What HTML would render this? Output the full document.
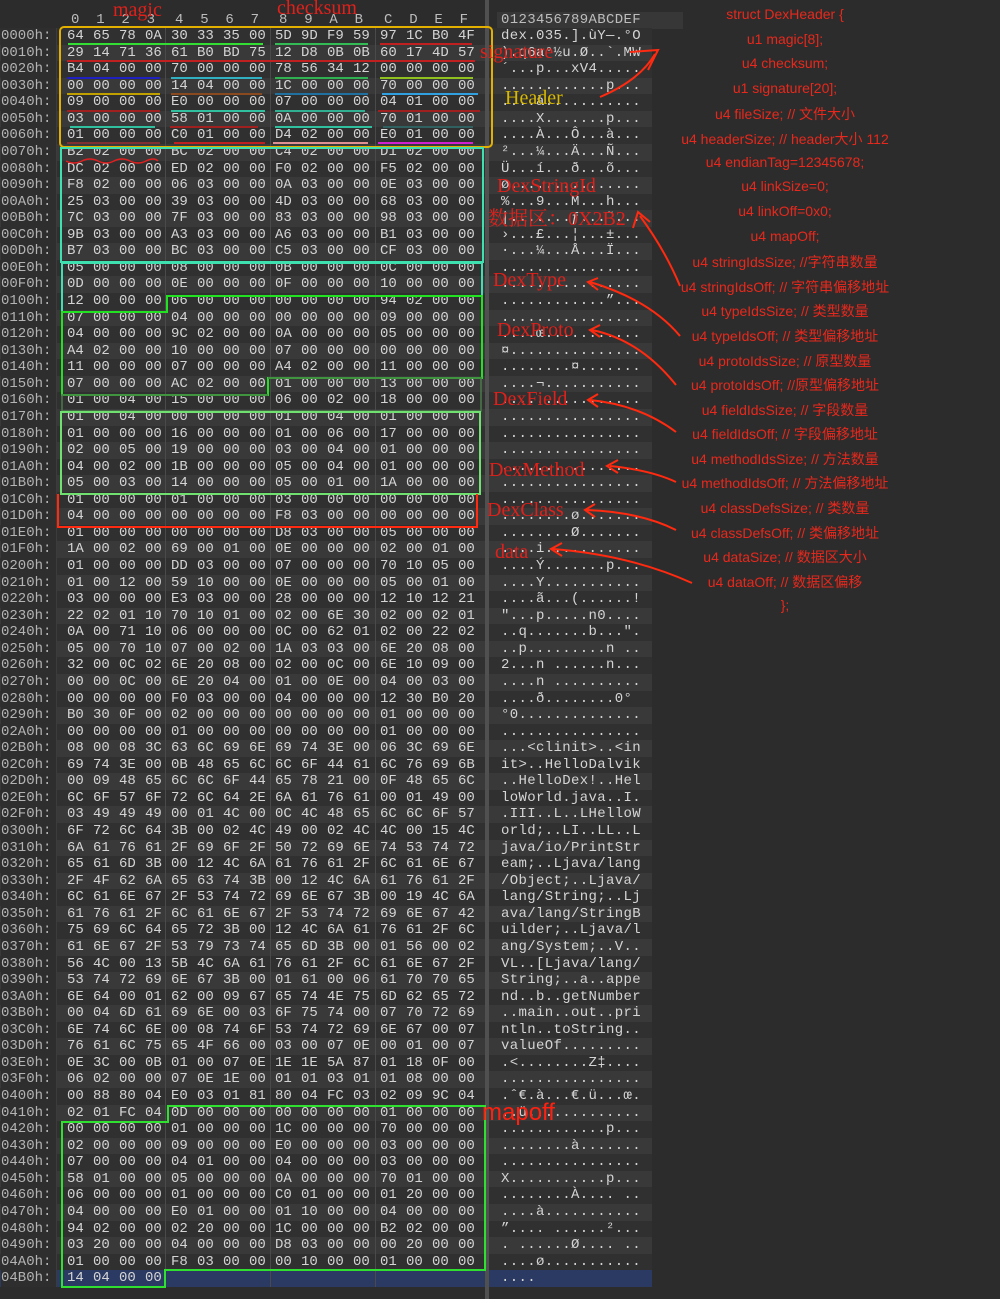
<!DOCTYPE html>
<html><head><meta charset="utf-8"><style>
*{margin:0;padding:0;box-sizing:border-box}
body{width:1000px;height:1299px;background:#2c2c2c;position:relative;overflow:hidden;font-family:"Liberation Mono",monospace;color:#d4d4d4}
#rows{position:absolute;left:0;top:28px;width:652px}
.r{height:16.57px;line-height:16.57px;position:relative;font-size:14px;white-space:pre;background:#303030}
.r:nth-child(even){background:#393939}
.a{position:absolute;left:1px;color:#b4b4b4;width:55px;background:#2e2e2e;height:100%}
.g{position:absolute;word-spacing:0.8px}
.g1{left:67px}.g2{left:171px}.g3{left:275px}.g4{left:380px}
.t{position:absolute;left:501px;letter-spacing:0.35px}
.hdr{position:absolute;top:12px;font-size:14px;white-space:pre;color:#bdbdbd}
.vl{position:absolute;top:28px;width:1px;height:1259px;background:#4a4a4a}
.rt{position:absolute;left:660px;width:250px;text-align:center;font-family:"Liberation Sans","Noto Sans CJK SC",sans-serif;font-size:14px;color:#e8281c}
.lab{position:absolute;font-family:"Liberation Serif","Noto Serif CJK SC",serif;font-size:20px;color:#e0201a;white-space:nowrap;line-height:1}
</style></head><body>
<div style="position:absolute;left:497px;top:12px;width:186px;height:17px;background:#373737"></div>
<div class="hdr" style="left:71px;word-spacing:0">0  1  2  3</div>
<div class="hdr" style="left:175px">4  5  6  7</div>
<div class="hdr" style="left:279px">8  9  A  B</div>
<div class="hdr" style="left:384px">C  D  E  F</div>
<div class="hdr" style="left:501px;letter-spacing:0.35px">0123456789ABCDEF</div>
<div id="rows">
<div class="r"><span class="a">0000h:</span><span class="g g1">64 65 78 0A</span><span class="g g2">30 33 35 00</span><span class="g g3">5D 9D F9 59</span><span class="g g4">97 1C B0 4F</span><span class="t">dex.035.].ùY—.°O</span></div>
<div class="r"><span class="a">0010h:</span><span class="g g1">29 14 71 36</span><span class="g g2">61 B0 BD 75</span><span class="g g3">12 D8 0B 0B</span><span class="g g4">60 17 4D 57</span><span class="t">).q6a°½u.Ø..`.MW</span></div>
<div class="r"><span class="a">0020h:</span><span class="g g1">B4 04 00 00</span><span class="g g2">70 00 00 00</span><span class="g g3">78 56 34 12</span><span class="g g4">00 00 00 00</span><span class="t">´...p...xV4.....</span></div>
<div class="r"><span class="a">0030h:</span><span class="g g1">00 00 00 00</span><span class="g g2">14 04 00 00</span><span class="g g3">1C 00 00 00</span><span class="g g4">70 00 00 00</span><span class="t">............p...</span></div>
<div class="r"><span class="a">0040h:</span><span class="g g1">09 00 00 00</span><span class="g g2">E0 00 00 00</span><span class="g g3">07 00 00 00</span><span class="g g4">04 01 00 00</span><span class="t">....à...........</span></div>
<div class="r"><span class="a">0050h:</span><span class="g g1">03 00 00 00</span><span class="g g2">58 01 00 00</span><span class="g g3">0A 00 00 00</span><span class="g g4">70 01 00 00</span><span class="t">....X.......p...</span></div>
<div class="r"><span class="a">0060h:</span><span class="g g1">01 00 00 00</span><span class="g g2">C0 01 00 00</span><span class="g g3">D4 02 00 00</span><span class="g g4">E0 01 00 00</span><span class="t">....À...Ô...à...</span></div>
<div class="r"><span class="a">0070h:</span><span class="g g1">B2 02 00 00</span><span class="g g2">BC 02 00 00</span><span class="g g3">C4 02 00 00</span><span class="g g4">D1 02 00 00</span><span class="t">²...¼...Ä...Ñ...</span></div>
<div class="r"><span class="a">0080h:</span><span class="g g1">DC 02 00 00</span><span class="g g2">ED 02 00 00</span><span class="g g3">F0 02 00 00</span><span class="g g4">F5 02 00 00</span><span class="t">Ü...í...ð...õ...</span></div>
<div class="r"><span class="a">0090h:</span><span class="g g1">F8 02 00 00</span><span class="g g2">06 03 00 00</span><span class="g g3">0A 03 00 00</span><span class="g g4">0E 03 00 00</span><span class="t">ø...............</span></div>
<div class="r"><span class="a">00A0h:</span><span class="g g1">25 03 00 00</span><span class="g g2">39 03 00 00</span><span class="g g3">4D 03 00 00</span><span class="g g4">68 03 00 00</span><span class="t">%...9...M...h...</span></div>
<div class="r"><span class="a">00B0h:</span><span class="g g1">7C 03 00 00</span><span class="g g2">7F 03 00 00</span><span class="g g3">83 03 00 00</span><span class="g g4">98 03 00 00</span><span class="t">|.......ƒ...˜...</span></div>
<div class="r"><span class="a">00C0h:</span><span class="g g1">9B 03 00 00</span><span class="g g2">A3 03 00 00</span><span class="g g3">A6 03 00 00</span><span class="g g4">B1 03 00 00</span><span class="t">›...£...¦...±...</span></div>
<div class="r"><span class="a">00D0h:</span><span class="g g1">B7 03 00 00</span><span class="g g2">BC 03 00 00</span><span class="g g3">C5 03 00 00</span><span class="g g4">CF 03 00 00</span><span class="t">·...¼...Å...Ï...</span></div>
<div class="r"><span class="a">00E0h:</span><span class="g g1">05 00 00 00</span><span class="g g2">08 00 00 00</span><span class="g g3">0B 00 00 00</span><span class="g g4">0C 00 00 00</span><span class="t">................</span></div>
<div class="r"><span class="a">00F0h:</span><span class="g g1">0D 00 00 00</span><span class="g g2">0E 00 00 00</span><span class="g g3">0F 00 00 00</span><span class="g g4">10 00 00 00</span><span class="t">................</span></div>
<div class="r"><span class="a">0100h:</span><span class="g g1">12 00 00 00</span><span class="g g2">06 00 00 00</span><span class="g g3">00 00 00 00</span><span class="g g4">94 02 00 00</span><span class="t">............”...</span></div>
<div class="r"><span class="a">0110h:</span><span class="g g1">07 00 00 00</span><span class="g g2">04 00 00 00</span><span class="g g3">00 00 00 00</span><span class="g g4">09 00 00 00</span><span class="t">................</span></div>
<div class="r"><span class="a">0120h:</span><span class="g g1">04 00 00 00</span><span class="g g2">9C 02 00 00</span><span class="g g3">0A 00 00 00</span><span class="g g4">05 00 00 00</span><span class="t">....œ...........</span></div>
<div class="r"><span class="a">0130h:</span><span class="g g1">A4 02 00 00</span><span class="g g2">10 00 00 00</span><span class="g g3">07 00 00 00</span><span class="g g4">00 00 00 00</span><span class="t">¤...............</span></div>
<div class="r"><span class="a">0140h:</span><span class="g g1">11 00 00 00</span><span class="g g2">07 00 00 00</span><span class="g g3">A4 02 00 00</span><span class="g g4">11 00 00 00</span><span class="t">........¤.......</span></div>
<div class="r"><span class="a">0150h:</span><span class="g g1">07 00 00 00</span><span class="g g2">AC 02 00 00</span><span class="g g3">01 00 00 00</span><span class="g g4">13 00 00 00</span><span class="t">....¬...........</span></div>
<div class="r"><span class="a">0160h:</span><span class="g g1">01 00 04 00</span><span class="g g2">15 00 00 00</span><span class="g g3">06 00 02 00</span><span class="g g4">18 00 00 00</span><span class="t">................</span></div>
<div class="r"><span class="a">0170h:</span><span class="g g1">01 00 04 00</span><span class="g g2">00 00 00 00</span><span class="g g3">01 00 04 00</span><span class="g g4">01 00 00 00</span><span class="t">................</span></div>
<div class="r"><span class="a">0180h:</span><span class="g g1">01 00 00 00</span><span class="g g2">16 00 00 00</span><span class="g g3">01 00 06 00</span><span class="g g4">17 00 00 00</span><span class="t">................</span></div>
<div class="r"><span class="a">0190h:</span><span class="g g1">02 00 05 00</span><span class="g g2">19 00 00 00</span><span class="g g3">03 00 04 00</span><span class="g g4">01 00 00 00</span><span class="t">................</span></div>
<div class="r"><span class="a">01A0h:</span><span class="g g1">04 00 02 00</span><span class="g g2">1B 00 00 00</span><span class="g g3">05 00 04 00</span><span class="g g4">01 00 00 00</span><span class="t">................</span></div>
<div class="r"><span class="a">01B0h:</span><span class="g g1">05 00 03 00</span><span class="g g2">14 00 00 00</span><span class="g g3">05 00 01 00</span><span class="g g4">1A 00 00 00</span><span class="t">................</span></div>
<div class="r"><span class="a">01C0h:</span><span class="g g1">01 00 00 00</span><span class="g g2">01 00 00 00</span><span class="g g3">03 00 00 00</span><span class="g g4">00 00 00 00</span><span class="t">................</span></div>
<div class="r"><span class="a">01D0h:</span><span class="g g1">04 00 00 00</span><span class="g g2">00 00 00 00</span><span class="g g3">F8 03 00 00</span><span class="g g4">00 00 00 00</span><span class="t">........ø.......</span></div>
<div class="r"><span class="a">01E0h:</span><span class="g g1">01 00 00 00</span><span class="g g2">00 00 00 00</span><span class="g g3">D8 03 00 00</span><span class="g g4">05 00 00 00</span><span class="t">........Ø.......</span></div>
<div class="r"><span class="a">01F0h:</span><span class="g g1">1A 00 02 00</span><span class="g g2">69 00 01 00</span><span class="g g3">0E 00 00 00</span><span class="g g4">02 00 01 00</span><span class="t">....i...........</span></div>
<div class="r"><span class="a">0200h:</span><span class="g g1">01 00 00 00</span><span class="g g2">DD 03 00 00</span><span class="g g3">07 00 00 00</span><span class="g g4">70 10 05 00</span><span class="t">....Ý.......p...</span></div>
<div class="r"><span class="a">0210h:</span><span class="g g1">01 00 12 00</span><span class="g g2">59 10 00 00</span><span class="g g3">0E 00 00 00</span><span class="g g4">05 00 01 00</span><span class="t">....Y...........</span></div>
<div class="r"><span class="a">0220h:</span><span class="g g1">03 00 00 00</span><span class="g g2">E3 03 00 00</span><span class="g g3">28 00 00 00</span><span class="g g4">12 10 12 21</span><span class="t">....ã...(......!</span></div>
<div class="r"><span class="a">0230h:</span><span class="g g1">22 02 01 10</span><span class="g g2">70 10 01 00</span><span class="g g3">02 00 6E 30</span><span class="g g4">02 00 02 01</span><span class="t">"...p.....n0....</span></div>
<div class="r"><span class="a">0240h:</span><span class="g g1">0A 00 71 10</span><span class="g g2">06 00 00 00</span><span class="g g3">0C 00 62 01</span><span class="g g4">02 00 22 02</span><span class="t">..q.......b...".</span></div>
<div class="r"><span class="a">0250h:</span><span class="g g1">05 00 70 10</span><span class="g g2">07 00 02 00</span><span class="g g3">1A 03 03 00</span><span class="g g4">6E 20 08 00</span><span class="t">..p.........n ..</span></div>
<div class="r"><span class="a">0260h:</span><span class="g g1">32 00 0C 02</span><span class="g g2">6E 20 08 00</span><span class="g g3">02 00 0C 00</span><span class="g g4">6E 10 09 00</span><span class="t">2...n ......n...</span></div>
<div class="r"><span class="a">0270h:</span><span class="g g1">00 00 0C 00</span><span class="g g2">6E 20 04 00</span><span class="g g3">01 00 0E 00</span><span class="g g4">04 00 03 00</span><span class="t">....n ..........</span></div>
<div class="r"><span class="a">0280h:</span><span class="g g1">00 00 00 00</span><span class="g g2">F0 03 00 00</span><span class="g g3">04 00 00 00</span><span class="g g4">12 30 B0 20</span><span class="t">....ð........0° </span></div>
<div class="r"><span class="a">0290h:</span><span class="g g1">B0 30 0F 00</span><span class="g g2">02 00 00 00</span><span class="g g3">00 00 00 00</span><span class="g g4">01 00 00 00</span><span class="t">°0..............</span></div>
<div class="r"><span class="a">02A0h:</span><span class="g g1">00 00 00 00</span><span class="g g2">01 00 00 00</span><span class="g g3">00 00 00 00</span><span class="g g4">01 00 00 00</span><span class="t">................</span></div>
<div class="r"><span class="a">02B0h:</span><span class="g g1">08 00 08 3C</span><span class="g g2">63 6C 69 6E</span><span class="g g3">69 74 3E 00</span><span class="g g4">06 3C 69 6E</span><span class="t">...&lt;clinit&gt;..&lt;in</span></div>
<div class="r"><span class="a">02C0h:</span><span class="g g1">69 74 3E 00</span><span class="g g2">0B 48 65 6C</span><span class="g g3">6C 6F 44 61</span><span class="g g4">6C 76 69 6B</span><span class="t">it&gt;..HelloDalvik</span></div>
<div class="r"><span class="a">02D0h:</span><span class="g g1">00 09 48 65</span><span class="g g2">6C 6C 6F 44</span><span class="g g3">65 78 21 00</span><span class="g g4">0F 48 65 6C</span><span class="t">..HelloDex!..Hel</span></div>
<div class="r"><span class="a">02E0h:</span><span class="g g1">6C 6F 57 6F</span><span class="g g2">72 6C 64 2E</span><span class="g g3">6A 61 76 61</span><span class="g g4">00 01 49 00</span><span class="t">loWorld.java..I.</span></div>
<div class="r"><span class="a">02F0h:</span><span class="g g1">03 49 49 49</span><span class="g g2">00 01 4C 00</span><span class="g g3">0C 4C 48 65</span><span class="g g4">6C 6C 6F 57</span><span class="t">.III..L..LHelloW</span></div>
<div class="r"><span class="a">0300h:</span><span class="g g1">6F 72 6C 64</span><span class="g g2">3B 00 02 4C</span><span class="g g3">49 00 02 4C</span><span class="g g4">4C 00 15 4C</span><span class="t">orld;..LI..LL..L</span></div>
<div class="r"><span class="a">0310h:</span><span class="g g1">6A 61 76 61</span><span class="g g2">2F 69 6F 2F</span><span class="g g3">50 72 69 6E</span><span class="g g4">74 53 74 72</span><span class="t">java/io/PrintStr</span></div>
<div class="r"><span class="a">0320h:</span><span class="g g1">65 61 6D 3B</span><span class="g g2">00 12 4C 6A</span><span class="g g3">61 76 61 2F</span><span class="g g4">6C 61 6E 67</span><span class="t">eam;..Ljava/lang</span></div>
<div class="r"><span class="a">0330h:</span><span class="g g1">2F 4F 62 6A</span><span class="g g2">65 63 74 3B</span><span class="g g3">00 12 4C 6A</span><span class="g g4">61 76 61 2F</span><span class="t">/Object;..Ljava/</span></div>
<div class="r"><span class="a">0340h:</span><span class="g g1">6C 61 6E 67</span><span class="g g2">2F 53 74 72</span><span class="g g3">69 6E 67 3B</span><span class="g g4">00 19 4C 6A</span><span class="t">lang/String;..Lj</span></div>
<div class="r"><span class="a">0350h:</span><span class="g g1">61 76 61 2F</span><span class="g g2">6C 61 6E 67</span><span class="g g3">2F 53 74 72</span><span class="g g4">69 6E 67 42</span><span class="t">ava/lang/StringB</span></div>
<div class="r"><span class="a">0360h:</span><span class="g g1">75 69 6C 64</span><span class="g g2">65 72 3B 00</span><span class="g g3">12 4C 6A 61</span><span class="g g4">76 61 2F 6C</span><span class="t">uilder;..Ljava/l</span></div>
<div class="r"><span class="a">0370h:</span><span class="g g1">61 6E 67 2F</span><span class="g g2">53 79 73 74</span><span class="g g3">65 6D 3B 00</span><span class="g g4">01 56 00 02</span><span class="t">ang/System;..V..</span></div>
<div class="r"><span class="a">0380h:</span><span class="g g1">56 4C 00 13</span><span class="g g2">5B 4C 6A 61</span><span class="g g3">76 61 2F 6C</span><span class="g g4">61 6E 67 2F</span><span class="t">VL..[Ljava/lang/</span></div>
<div class="r"><span class="a">0390h:</span><span class="g g1">53 74 72 69</span><span class="g g2">6E 67 3B 00</span><span class="g g3">01 61 00 06</span><span class="g g4">61 70 70 65</span><span class="t">String;..a..appe</span></div>
<div class="r"><span class="a">03A0h:</span><span class="g g1">6E 64 00 01</span><span class="g g2">62 00 09 67</span><span class="g g3">65 74 4E 75</span><span class="g g4">6D 62 65 72</span><span class="t">nd..b..getNumber</span></div>
<div class="r"><span class="a">03B0h:</span><span class="g g1">00 04 6D 61</span><span class="g g2">69 6E 00 03</span><span class="g g3">6F 75 74 00</span><span class="g g4">07 70 72 69</span><span class="t">..main..out..pri</span></div>
<div class="r"><span class="a">03C0h:</span><span class="g g1">6E 74 6C 6E</span><span class="g g2">00 08 74 6F</span><span class="g g3">53 74 72 69</span><span class="g g4">6E 67 00 07</span><span class="t">ntln..toString..</span></div>
<div class="r"><span class="a">03D0h:</span><span class="g g1">76 61 6C 75</span><span class="g g2">65 4F 66 00</span><span class="g g3">03 00 07 0E</span><span class="g g4">00 01 00 07</span><span class="t">valueOf.........</span></div>
<div class="r"><span class="a">03E0h:</span><span class="g g1">0E 3C 00 0B</span><span class="g g2">01 00 07 0E</span><span class="g g3">1E 1E 5A 87</span><span class="g g4">01 18 0F 00</span><span class="t">.&lt;........Z‡....</span></div>
<div class="r"><span class="a">03F0h:</span><span class="g g1">06 02 00 00</span><span class="g g2">07 0E 1E 00</span><span class="g g3">01 01 03 01</span><span class="g g4">01 08 00 00</span><span class="t">................</span></div>
<div class="r"><span class="a">0400h:</span><span class="g g1">00 88 80 04</span><span class="g g2">E0 03 01 81</span><span class="g g3">80 04 FC 03</span><span class="g g4">02 09 9C 04</span><span class="t">.ˆ€.à...€.ü...œ.</span></div>
<div class="r"><span class="a">0410h:</span><span class="g g1">02 01 FC 04</span><span class="g g2">0D 00 00 00</span><span class="g g3">00 00 00 00</span><span class="g g4">01 00 00 00</span><span class="t">..ü.............</span></div>
<div class="r"><span class="a">0420h:</span><span class="g g1">00 00 00 00</span><span class="g g2">01 00 00 00</span><span class="g g3">1C 00 00 00</span><span class="g g4">70 00 00 00</span><span class="t">............p...</span></div>
<div class="r"><span class="a">0430h:</span><span class="g g1">02 00 00 00</span><span class="g g2">09 00 00 00</span><span class="g g3">E0 00 00 00</span><span class="g g4">03 00 00 00</span><span class="t">........à.......</span></div>
<div class="r"><span class="a">0440h:</span><span class="g g1">07 00 00 00</span><span class="g g2">04 01 00 00</span><span class="g g3">04 00 00 00</span><span class="g g4">03 00 00 00</span><span class="t">................</span></div>
<div class="r"><span class="a">0450h:</span><span class="g g1">58 01 00 00</span><span class="g g2">05 00 00 00</span><span class="g g3">0A 00 00 00</span><span class="g g4">70 01 00 00</span><span class="t">X...........p...</span></div>
<div class="r"><span class="a">0460h:</span><span class="g g1">06 00 00 00</span><span class="g g2">01 00 00 00</span><span class="g g3">C0 01 00 00</span><span class="g g4">01 20 00 00</span><span class="t">........À.... ..</span></div>
<div class="r"><span class="a">0470h:</span><span class="g g1">04 00 00 00</span><span class="g g2">E0 01 00 00</span><span class="g g3">01 10 00 00</span><span class="g g4">04 00 00 00</span><span class="t">....à...........</span></div>
<div class="r"><span class="a">0480h:</span><span class="g g1">94 02 00 00</span><span class="g g2">02 20 00 00</span><span class="g g3">1C 00 00 00</span><span class="g g4">B2 02 00 00</span><span class="t">”.... ......²...</span></div>
<div class="r"><span class="a">0490h:</span><span class="g g1">03 20 00 00</span><span class="g g2">04 00 00 00</span><span class="g g3">D8 03 00 00</span><span class="g g4">00 20 00 00</span><span class="t">. ......Ø.... ..</span></div>
<div class="r"><span class="a">04A0h:</span><span class="g g1">01 00 00 00</span><span class="g g2">F8 03 00 00</span><span class="g g3">00 10 00 00</span><span class="g g4">01 00 00 00</span><span class="t">....ø...........</span></div>
<div class="r" style="background:#2b3a63"><span class="a">04B0h:</span><span class="g g1">14 04 00 00</span><span class="t">....</span></div>
</div>
<div class="vl" style="left:56px;background:#3c3c3c"></div>
<div class="vl" style="left:165px"></div>
<div class="vl" style="left:270px"></div>
<div class="vl" style="left:375px"></div>
<div style="position:absolute;left:485px;top:0;width:4px;height:1299px;background:#505050"></div>

<svg width="1000" height="1299" style="position:absolute;left:0;top:0" fill="none">
<rect x="60" y="27" width="432" height="120" rx="4" stroke="#e4b000" stroke-width="2"/>
<g stroke-width="2">
<line x1="68" y1="44" x2="263" y2="44" stroke="#33dd33"/><line x1="275" y1="44" x2="368" y2="44" stroke="#33bb55"/><line x1="380" y1="44" x2="472" y2="44" stroke="#c02020"/>
<line x1="67" y1="61" x2="475" y2="61" stroke="#c02020"/>
<line x1="67" y1="78" x2="160" y2="78" stroke="#2020c0"/><line x1="171" y1="78" x2="262" y2="78" stroke="#30b0c0"/><line x1="275" y1="78" x2="368" y2="78" stroke="#30b050"/><line x1="380" y1="78" x2="473" y2="78" stroke="#90c020"/>
<line x1="67" y1="94" x2="160" y2="94" stroke="#c0a000"/><line x1="171" y1="94" x2="262" y2="94" stroke="#8a4a20"/><line x1="275" y1="94" x2="368" y2="94" stroke="#2070a0"/><line x1="382" y1="94" x2="478" y2="94" stroke="#30a0e0"/>
<line x1="67" y1="111" x2="160" y2="111" stroke="#a02020"/><line x1="171" y1="111" x2="265" y2="111" stroke="#30c0a0"/><line x1="275" y1="111" x2="365" y2="111" stroke="#30b090"/><line x1="378" y1="111" x2="480" y2="111" stroke="#a02020"/>
<line x1="70" y1="127" x2="155" y2="127" stroke="#30c0a0"/><line x1="170" y1="127" x2="258" y2="127" stroke="#a02020"/><line x1="275" y1="127" x2="372" y2="127" stroke="#30c0a0"/><line x1="383" y1="127" x2="473" y2="127" stroke="#306060"/>
<line x1="67" y1="143" x2="160" y2="143" stroke="#803030"/><line x1="174" y1="143" x2="265" y2="143" stroke="#c02020"/><line x1="273" y1="143" x2="368" y2="143" stroke="#e09090"/><line x1="378" y1="143" x2="473" y2="143" stroke="#d020d0"/>
</g>
<path d="M66 161 q8 4 16 0 t16 0 t16 0 t16 0 t16 0 t12 0" stroke="#e02020" stroke-width="1.5"/>
<rect x="61" y="148" width="422" height="114" stroke="#3fe0b0" stroke-width="2"/>
<path d="M62 263 H482 V296 H167 V312 H62 Z" stroke="#3fe0b0" stroke-width="2"/>
<path d="M62 312 H167 V296 H482 V378 H268 V395 H62 Z" stroke="#22e022" stroke-width="2"/>
<path d="M268 378 H481 V411 H62 V395 H268" stroke="#4a7a4a" stroke-width="1.5"/>
<rect x="61" y="412" width="419" height="82" stroke="#70e070" stroke-width="2"/>
<path d="M58 494 V527 H477 V494" stroke="#ff2a10" stroke-width="2"/>
<path d="M168 1106 H485 V1270 H165 V1287 H62 V1122 H168 Z" stroke="#30e030" stroke-width="2"/>
<g stroke="#ff2a10" stroke-width="2">
<path d="M600 97 Q640 80 655 54"/><path d="M630 52 L658 50 L648 70"/>
<path d="M680 286 Q665 250 640 216"/><path d="M633 228 L638 212 L650 222"/>
<path d="M680 336 Q650 300 590 282"/><path d="M598 278 L588 282 L598 290"/>
<path d="M676 385 Q640 340 592 330"/><path d="M600 325 L590 330 L600 337"/>
<path d="M676 432 Q640 405 590 400"/><path d="M598 394 L588 400 L598 407"/>
<path d="M676 482 Q650 470 610 466"/><path d="M618 460 L607 466 L618 473"/>
<path d="M676 530 Q640 512 587 510"/><path d="M595 504 L585 510 L595 517"/>
<path d="M692 583 Q630 555 553 549"/><path d="M562 543 L551 549 L562 556"/>
</g>
</svg>

<div class="lab" style="left:113px;top:0px">magic</div>
<div class="lab" style="left:277px;top:-2px">checksum</div>
<div class="lab" style="left:480px;top:42px">signature</div>
<div class="lab" style="left:505px;top:88px;color:#d8b800">Header</div>
<div class="lab" style="left:497px;top:176px">DexStringId</div>
<div class="lab" style="left:488px;top:209px">数据区：0X2B2</div>
<div class="lab" style="left:493px;top:270px">DexType</div>
<div class="lab" style="left:497px;top:320px">DexProto</div>
<div class="lab" style="left:493px;top:389px">DexField</div>
<div class="lab" style="left:489px;top:460px">DexMethod</div>
<div class="lab" style="left:487px;top:500px">DexClass</div>
<div class="lab" style="left:495px;top:542px">data</div>
<div class="lab" style="left:482px;top:1101px;font-family:'Liberation Sans',sans-serif;font-size:24px;color:#ff2010">mapoff</div>

<div class="rt" style="top:6px">struct DexHeader {</div>
<div class="rt" style="top:31px">u1 magic[8];</div>
<div class="rt" style="top:55px">u4 checksum;</div>
<div class="rt" style="top:80px">u1 signature[20];</div>
<div class="rt" style="top:104px">u4 fileSize; // 文件大小</div>
<div class="rt" style="top:129px">u4 headerSize; // header大小 112</div>
<div class="rt" style="top:154px">u4 endianTag=12345678;</div>
<div class="rt" style="top:178px">u4 linkSize=0;</div>
<div class="rt" style="top:203px">u4 linkOff=0x0;</div>
<div class="rt" style="top:228px">u4 mapOff;</div>
<div class="rt" style="top:252px">u4 stringIdsSize; //字符串数量</div>
<div class="rt" style="top:277px">u4 stringIdsOff; // 字符串偏移地址</div>
<div class="rt" style="top:301px">u4 typeIdsSize; // 类型数量</div>
<div class="rt" style="top:326px">u4 typeIdsOff; // 类型偏移地址</div>
<div class="rt" style="top:351px">u4 protoIdsSize;  // 原型数量</div>
<div class="rt" style="top:375px">u4 protoIdsOff;  //原型偏移地址</div>
<div class="rt" style="top:400px">u4 fieldIdsSize; // 字段数量</div>
<div class="rt" style="top:424px">u4 fieldIdsOff; // 字段偏移地址</div>
<div class="rt" style="top:449px">u4 methodIdsSize; // 方法数量</div>
<div class="rt" style="top:473px">u4 methodIdsOff; // 方法偏移地址</div>
<div class="rt" style="top:498px">u4 classDefsSize; // 类数量</div>
<div class="rt" style="top:523px">u4 classDefsOff; // 类偏移地址</div>
<div class="rt" style="top:547px">u4 dataSize; // 数据区大小</div>
<div class="rt" style="top:572px">u4 dataOff; // 数据区偏移</div>
<div class="rt" style="top:597px">};</div>
</body></html>
